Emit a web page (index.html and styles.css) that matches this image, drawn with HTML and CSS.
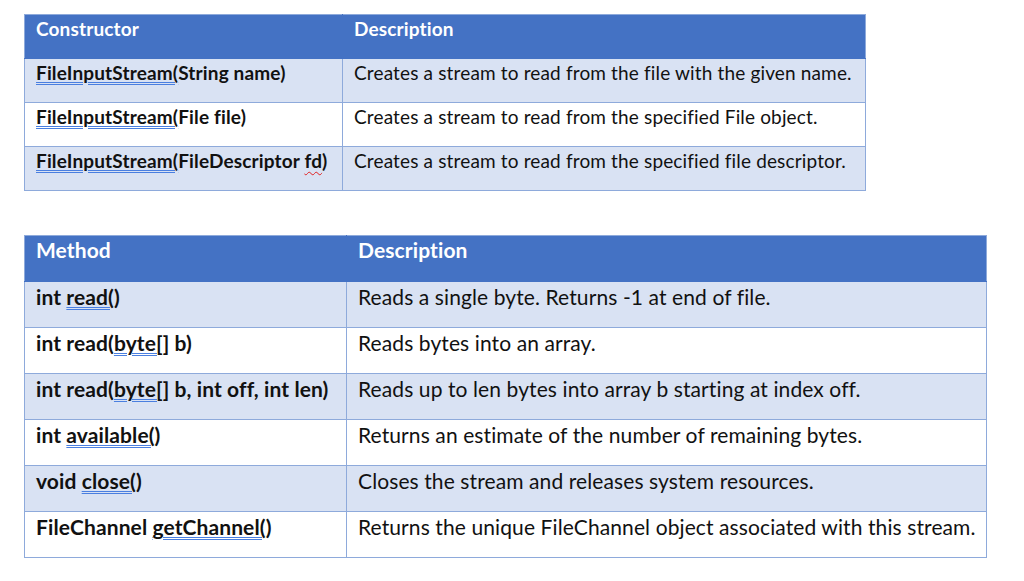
FILE: index.html
```html
<!DOCTYPE html>
<html>
<head>
<meta charset="utf-8">
<link rel="stylesheet" href="styles.css">
</head>
<body>
<div class="page">
  <table class="grid grid-ctor">
    <colgroup><col class="c1"><col></colgroup>
    <thead>
      <tr><th>Constructor</th><th>Description</th></tr>
    </thead>
    <tbody>
      <tr class="band"><td class="code"><span class="gram">FileInputStream(</span>String name)</td><td>Creates a stream to read from the file with the given name.</td></tr>
      <tr><td class="code"><span class="gram">FileInputStream(</span>File file)</td><td>Creates a stream to read from the specified File object.</td></tr>
      <tr class="band"><td class="code"><span class="gram">FileInputStream(</span>FileDescriptor <span class="spell">fd</span>)</td><td>Creates a stream to read from the specified file descriptor.</td></tr>
    </tbody>
  </table>

  <table class="grid grid-method">
    <colgroup><col class="c1"><col></colgroup>
    <thead>
      <tr><th>Method</th><th>Description</th></tr>
    </thead>
    <tbody>
      <tr class="band"><td class="code">int <span class="gram">read(</span>)</td><td>Reads a single byte. Returns -1 at end of file.</td></tr>
      <tr><td class="code">int read(<span class="gram">byte[</span>] b)</td><td>Reads bytes into an array.</td></tr>
      <tr class="band"><td class="code">int read(<span class="gram">byte[</span>] b, int off, int len)</td><td>Reads up to len bytes into array b starting at index off.</td></tr>
      <tr><td class="code">int <span class="gram">available(</span>)</td><td>Returns an estimate of the number of remaining bytes.</td></tr>
      <tr class="band"><td class="code">void <span class="gram">close(</span>)</td><td>Closes the stream and releases system resources.</td></tr>
      <tr><td class="code">FileChannel <span class="gram">getChannel(</span>)</td><td>Returns the unique FileChannel object associated with this stream.</td></tr>
    </tbody>
  </table>
</div>
</body>
</html>
```

FILE: styles.css
```css
html, body {
  margin: 0;
  padding: 0;
  background: #ffffff;
}

body {
  font-family: "Lato", "Open Sans", "Liberation Sans", sans-serif;
  color: #111111;
}

.page {
  display: flex;
  flex-direction: column;
  align-items: flex-start;
  gap: 44px;
  padding: 14px 0 0 24px;
}

.grid {
  border-collapse: collapse;
  table-layout: fixed;
}

.grid th,
.grid td {
  border: 1px solid #8eaadb;
  text-align: left;
  vertical-align: top;
  padding: 4px 11px 0 11px;
  white-space: nowrap;
  line-height: 1.2;
}

.grid th {
  background: #4472c4;
  color: #ffffff;
  font-weight: 700;
  border-color: #4472c4;
}

.grid thead tr th:first-child { border-left-color: #8eaadb; }
.grid thead tr th:last-child { border-right-color: #8eaadb; }
.grid thead tr th { border-top-color: #8eaadb; }

.grid tr.band td {
  background: #d9e2f3;
}

.grid td.code {
  font-weight: 700;
}

/* constructor table */
.grid-ctor {
  width: 842px;
  font-size: 19px;
  letter-spacing: 0.15px;
}
.grid-ctor col.c1 { width: 318px; }
.grid-ctor th { height: 40px; padding-top: 3px; }
.grid-ctor td { height: 40px; padding-top: 3px; }

/* method table */
.grid-method {
  width: 963px;
  font-size: 21px;
  letter-spacing: 0.1px;
}
.grid-method col.c1 { width: 322px; }
.grid-method th { height: 44px; padding-top: 1px; }
.grid-method td { height: 43px; padding-top: 2px; }

.gram {
  text-decoration-line: underline;
  text-decoration-style: double;
  text-decoration-color: #4a7fe0;
  text-decoration-thickness: 1px;
  text-underline-offset: 2px;
}

.spell {
  text-decoration-line: underline;
  text-decoration-style: wavy;
  text-decoration-color: #e02020;
  text-decoration-thickness: 1px;
  text-underline-offset: 3px;
}
```
